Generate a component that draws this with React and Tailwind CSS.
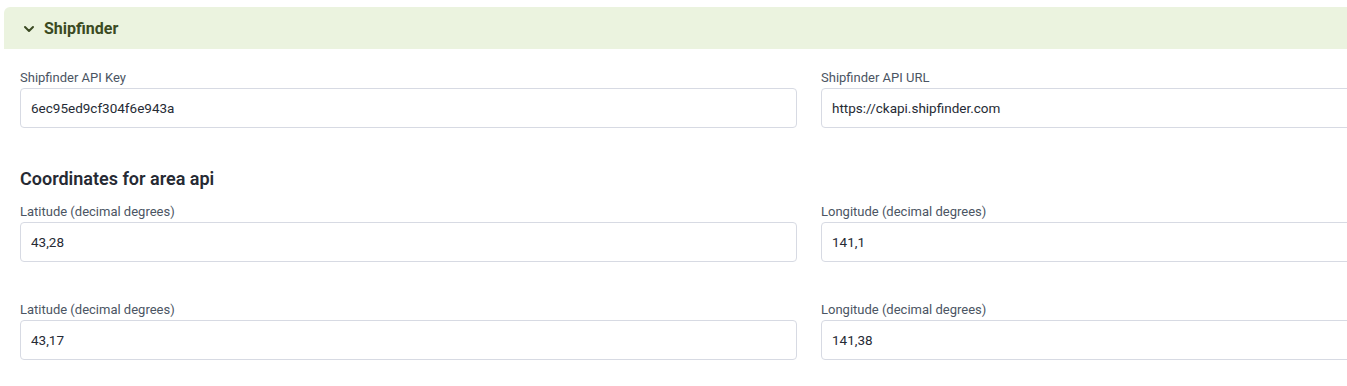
import React from "react";

function Field({ label, value }) {
  return (
    <div className="flex flex-col">
      <label className="text-[13px] leading-[16px] text-[#4b5563] mb-[2px]">{label}</label>
      <input
        readOnly
        value={value}
        className="h-[40px] rounded-[4px] border border-[#d7dae3] bg-white px-[10px] text-[13.5px] text-[#262b35] outline-none"
      />
    </div>
  );
}

export default function App() {
  return (
    <div className="w-[1347px] h-[386px] overflow-hidden bg-white font-['Roboto',sans-serif]">
      <div className="w-[1610px] pl-[4px] pt-[7px]">
        <div className="h-[42px] rounded-tl-[6px] bg-[#ebf3df] flex items-center pt-[2px] pl-[19px] gap-[9px] text-[#3b4a22]">
          <svg width="12" height="8" viewBox="0 0 12 8" fill="none" stroke="currentColor" strokeWidth="2" strokeLinecap="round" strokeLinejoin="round">
            <path d="M2 2l4 4 4-4" />
          </svg>
          <span className="text-[16px] font-bold">Shipfinder</span>
        </div>
        <div className="pl-[16px] pt-[21px]">
          <div className="grid grid-cols-[777px_777px] gap-x-[24px]">
            <Field label="Shipfinder API Key" value="6ec95ed9cf304f6e943a" />
            <Field label="Shipfinder API URL" value="https://ckapi.shipfinder.com" />
          </div>
          <h3 className="mt-[39px] mb-[13px] text-[18px] leading-[24px] font-semibold text-[#262a33]">Coordinates for area api</h3>
          <div className="grid grid-cols-[777px_777px] gap-x-[24px] gap-y-[40px]">
            <Field label="Latitude (decimal degrees)" value="43,28" />
            <Field label="Longitude (decimal degrees)" value="141,1" />
            <Field label="Latitude (decimal degrees)" value="43,17" />
            <Field label="Longitude (decimal degrees)" value="141,38" />
          </div>
        </div>
      </div>
    </div>
  );
}
